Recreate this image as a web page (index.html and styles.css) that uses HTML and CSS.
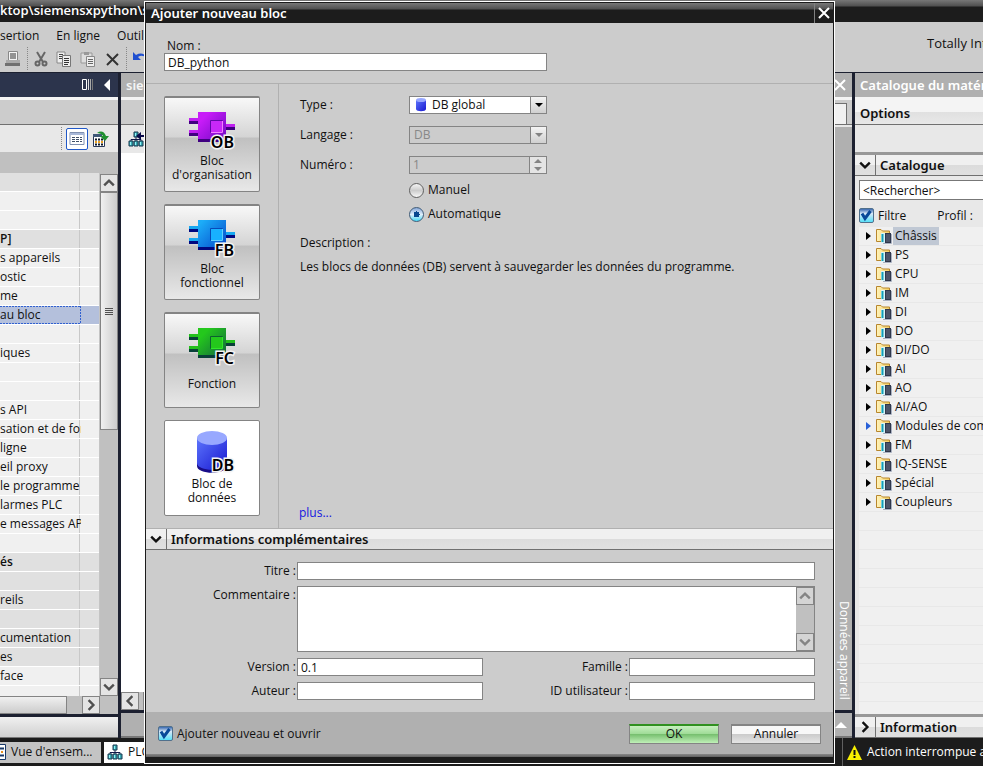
FILE: index.html
```html
<!DOCTYPE html>
<html lang="fr">
<head>
<meta charset="utf-8">
<title>Ajouter nouveau bloc</title>
<link rel="stylesheet" href="styles.css">
</head>
<body>
<svg class="defs" aria-hidden="true">
  <defs>
    <linearGradient id="g-ob" x1="0" y1="0" x2="1" y2="1"><stop offset="0.2" stop-color="#c81cf8"/><stop offset="1" stop-color="#6a08c0"/></linearGradient>
    <linearGradient id="g-fb" x1="0" y1="0" x2="1" y2="1"><stop offset="0.1" stop-color="#1cacf8"/><stop offset="1" stop-color="#0444c8"/></linearGradient>
    <linearGradient id="g-fc" x1="0" y1="0" x2="1" y2="1"><stop offset="0.2" stop-color="#24c81c"/><stop offset="1" stop-color="#126040"/></linearGradient>
    <linearGradient id="g-db" x1="0" y1="0" x2="1" y2="1"><stop offset="0" stop-color="#5c74fc"/><stop offset="1" stop-color="#1818d0"/></linearGradient>
    <linearGradient id="g-folder" x1="0" y1="0" x2="1" y2="0"><stop offset="0" stop-color="#fff2b8"/><stop offset="1" stop-color="#f4cf62"/></linearGradient>
    <symbol id="folder" viewBox="0 0 16 16">
      <path d="M1 2h4l2 1h7v10H1z" fill="url(#g-folder)"/>
      <path d="M5 13.500H0.500V1.500h4.500l1.500 1.500h7v2" fill="none" stroke="#b8862c"/>
      <path d="M5 5h4v10H5z" fill="#d8f4f8"/><path d="M6.500 6v8" stroke="#10a0b8" stroke-width="2"/>
      <path d="M9 5h6v10H9z" fill="#30384c"/>
      <path d="M10 6h4v8h-4z" fill="#4c5468"/>
      <path d="M15.500 6v9.500H7" fill="none" stroke="#a8b0c0"/>
    </symbol>
    <symbol id="down" viewBox="0 0 10 8"><path d="M1 2l4 4 4-4" fill="none" stroke="currentColor" stroke-width="2"/></symbol>
    <symbol id="network" viewBox="0 0 16 16">
      <path d="M8 6v3M3 11V8.500h10V11M8 9v2" fill="none" stroke="#101848"/>
      <path d="M6 1h4v5H6zM1 10h4v5H1zM6 10h4v5H6zM11 10h4v5h-4z" fill="#38a8b0" stroke="#183850"/>
      <path d="M7 2h1v3H7zM2 11h1v3H2zM7 11h1v3H7zM12 11h1v3h-1z" fill="#90f4f8"/>
    </symbol>
    <symbol id="check" viewBox="0 0 14 14"><path d="M3 5.500l3 5 5.500-7.500" fill="none" stroke="#084898" stroke-width="3"/></symbol>
  </defs>
</svg>

<div class="app">
  <header class="app-title">ktop\siemensxpython\sie</header>
  <div class="app-top">
    <div>
      <nav class="menu"><a href="#">sertion</a><a href="#">En ligne</a><a href="#">Outils</a></nav>
      <div class="tools">
        <svg width="16" height="16" viewBox="0 0 16 16"><path d="M3.500 0.500h9v9h-9z" fill="#f4f4f4" stroke="#888"/><path d="M5 3h6M5 5h6M5 7h6" stroke="#333"/><path d="M1 9h14v4H1z" fill="#aaa"/><path d="M0 12h15v3H0z" fill="#707070"/></svg>
        <i class="dots"></i>
        <svg width="14" height="16" viewBox="0 0 14 16"><path d="M3 1l6 10M11 1L5 11" stroke="#666" stroke-width="2"/><circle cx="3.500" cy="12.500" r="2" fill="none" stroke="#666" stroke-width="2"/><circle cx="10.500" cy="12.500" r="2" fill="none" stroke="#666" stroke-width="2"/></svg>
        <svg width="16" height="16" viewBox="0 0 16 16"><path d="M1 1h8v11H1z" fill="#eee" stroke="#888"/><path d="M3 3.500h4M3 5.500h4M3 7.500h4" stroke="#444"/><path d="M6.500 4.500h8v11h-8z" fill="#eee" stroke="#777"/><path d="M8 7.500h5M8 9.500h5M8 11.500h5M8 13.500h4" stroke="#333"/></svg>
        <svg width="16" height="16" viewBox="0 0 16 16"><path d="M1 2h11v10H1z" fill="#ddd" stroke="#999"/><path d="M4 1h5v3H4z" fill="#999"/><path d="M6.500 5.500h8v10h-8z" fill="#eee" stroke="#888"/><path d="M8 8.500h5M8 10.500h5M8 12.500h5" stroke="#666"/></svg>
        <svg width="16" height="16" viewBox="0 0 16 16"><path d="M3 3l11 11M14 3L3 14" stroke="#333" stroke-width="2"/></svg>
        <i class="dots"></i>
        <svg width="16" height="16" viewBox="0 0 16 16"><path d="M0 1v8h8L5 6q4-3 9 1Q10 0 3 4z" fill="#2050d0"/></svg>
      </div>
    </div>
    <div class="brand">Totally Integrated</div>
  </div>

  <main class="work">
    <section class="left">
      <div class="left-head">
        <svg width="12" height="12" viewBox="0 0 12 12"><path d="M0.500 0.500h4v10h-4z" fill="none" stroke="#fff"/><path d="M6.500 0v11" stroke="#ddd"/><path d="M8.500 0v11" stroke="#aaa"/><path d="M10.500 0v11" stroke="#777"/></svg>
        <svg width="8" height="12" viewBox="0 0 8 12"><path d="M7 0v12L1 6z" fill="#fff"/></svg>
      </div>
      <div class="gap-bar"></div>
      <div class="left-tools">
        <i class="dots"></i>
        <button class="view" aria-label="Liste"><svg width="16" height="14" viewBox="0 0 16 14"><path d="M1 0.500h14v12H1z" fill="#fff" stroke="#8090b0"/><path d="M1 1h14v2H1z" fill="#a8b8d8"/><path d="M3 5.500h10M3 7.500h10M3 9.500h10" stroke="#405068" stroke-dasharray="3 1"/></svg></button>
        <svg width="18" height="18" viewBox="0 0 18 18"><path d="M1.500 4.500h11v12h-11z" fill="#fff" stroke="#283858"/><path d="M1 4h9v3H1z" fill="#405878"/><path d="M3 9.500h8M3 14.500h8" stroke="#101828" stroke-width="2" stroke-dasharray="2 1"/><path d="M3 12h8" stroke="#e8a020" stroke-width="2" stroke-dasharray="2 1"/><path d="M5 3q6-4 9 3h3l-4 5-5-5h3q-2-3-6-3z" fill="#209030"/></svg>
      </div>
      <div class="tree-head"></div>
      <div class="tree-body">
        <ul class="tree">
          <li class="dk"></li><li></li><li></li>
          <li class="dk b">P]</li>
          <li>s appareils</li><li>ostic</li><li>me</li>
          <li class="sel">au bloc</li>
          <li></li><li>iques</li><li></li><li></li>
          <li>s API</li><li>sation et de form</li><li>ligne</li><li>eil proxy</li><li>le programme</li><li>larmes PLC</li><li>e messages API</li>
          <li></li>
          <li class="dk b">és</li><li class="dk"></li><li class="dk">reils</li><li class="dk"></li><li class="dk">cumentation</li><li class="dk">es</li>
          <li>face</li><li></li>
        </ul>
        <div class="vscroll">
          <button aria-label="Haut"><svg class="up" width="12" height="10"><use href="#down"/></svg></button>
          <div class="thumb"><i></i></div>
          <button class="end" aria-label="Bas"><svg width="12" height="10"><use href="#down"/></svg></button>
        </div>
      </div>
      <div class="hscroll">
        <div class="hthumb"></div>
        <button aria-label="Droite"><svg class="rt" width="12" height="10"><use href="#down"/></svg></button>
        <span></span>
      </div>
      <div class="left-foot"></div>
    </section>

    <section class="center">
      <div class="center-head"><span>siemensxpython</span><svg width="12" height="12" viewBox="0 0 12 12"><path d="M1 1l10 10M11 1L1 11" stroke="#fff" stroke-width="2"/></svg></div>
      <div class="center-tabs"><span></span></div>
      <div class="center-tools"><svg width="16" height="16"><use href="#network"/></svg><svg class="arrow" width="10" height="10" viewBox="0 0 10 10"><path d="M0 5l5-4v3h5v2H5v3z" fill="#080848"/></svg></div>
      <div class="center-body">
        <div class="canvas"><div></div><div class="hscroll"><button aria-label="Gauche"><svg class="lt" width="12" height="10"><use href="#down"/></svg></button><div class="hthumb"></div></div></div>
        <div class="side"><span>Données appareil</span></div>
      </div>
      <div class="center-foot"><svg width="12" height="6" viewBox="0 0 12 6"><path d="M0 6l6-6 6 6z" fill="#fff"/></svg></div>
    </section>

    <section class="right">
      <div class="right-head">Catalogue du matériel</div>
      <div class="options">Options</div>
      <div class="blank"></div>
      <div class="bar"><button aria-label="Réduire"><svg width="12" height="10"><use href="#down"/></svg></button><h2>Catalogue</h2></div>
      <div class="search"><input aria-label="Rechercher" value="&lt;Rechercher&gt;"></div>
      <div class="filter"><label class="tick"><input type="checkbox" checked><svg width="14" height="14"><use href="#check"/></svg>Filtre</label><span>Profil :</span></div>
      <ul class="catalog">
        <li class="on"><svg width="16" height="16"><use href="#folder"/></svg><span>Châssis</span></li>
        <li><svg width="16" height="16"><use href="#folder"/></svg><span>PS</span></li>
        <li><svg width="16" height="16"><use href="#folder"/></svg><span>CPU</span></li>
        <li><svg width="16" height="16"><use href="#folder"/></svg><span>IM</span></li>
        <li><svg width="16" height="16"><use href="#folder"/></svg><span>DI</span></li>
        <li><svg width="16" height="16"><use href="#folder"/></svg><span>DO</span></li>
        <li><svg width="16" height="16"><use href="#folder"/></svg><span>DI/DO</span></li>
        <li><svg width="16" height="16"><use href="#folder"/></svg><span>AI</span></li>
        <li><svg width="16" height="16"><use href="#folder"/></svg><span>AO</span></li>
        <li><svg width="16" height="16"><use href="#folder"/></svg><span>AI/AO</span></li>
        <li class="blue"><svg width="16" height="16"><use href="#folder"/></svg><span>Modules de communication</span></li>
        <li><svg width="16" height="16"><use href="#folder"/></svg><span>FM</span></li>
        <li><svg width="16" height="16"><use href="#folder"/></svg><span>IQ-SENSE</span></li>
        <li><svg width="16" height="16"><use href="#folder"/></svg><span>Spécial</span></li>
        <li><svg width="16" height="16"><use href="#folder"/></svg><span>Coupleurs</span></li>
      </ul>
      <div class="bar"><button aria-label="Développer"><svg class="rt" width="12" height="10"><use href="#down"/></svg></button><h2>Information</h2></div>
    </section>
  </main>

  <footer class="status">
    <div class="tab"><svg width="6" height="16" viewBox="0 0 6 16"><path d="M0 0.500h5.500v15H0" fill="#fff" stroke="#183868"/><path d="M0 4.500h4M0 11.500h4" stroke="#183868" stroke-width="2"/><path d="M1 8h2" stroke="#e89020" stroke-width="2"/></svg>Vue d'ensem...</div>
    <div class="tab active"><svg width="16" height="16"><use href="#network"/></svg>PLC_1</div>
    <div class="message"><svg width="15" height="15" viewBox="0 0 15 15"><path d="M7.500 0L15 15H0z" fill="#f8f000"/><path d="M7.500 5v5M7.500 11v2" stroke="#101010" stroke-width="2"/></svg>Action interrompue avec</div>
  </footer>
</div>

<form class="dialog" role="dialog" aria-labelledby="dlg-title">
  <div class="dlg-head"><h1 id="dlg-title">Ajouter nouveau bloc</h1><button type="button" aria-label="Fermer"><svg width="12" height="12" viewBox="0 0 12 12"><path d="M1 1l10 10M11 1L1 11" stroke="#fff" stroke-width="2"/></svg></button></div>
  <div class="name"><label for="nom">Nom :</label><input id="nom" value="DB_python"></div>
  <div class="dlg-main">
    <div class="kinds">
      <button type="button"><svg width="48" height="42" viewBox="0 0 48 42"><path d="M2 9h9v3H2zM2 21h9v3H2zM39 15h9v3h-9z" fill="#c020f0"/><path d="M2 12h9v3H2zM2 24h9v3H2zM39 18h9v3h-9z" fill="#400080"/><path d="M11 3h28v30H11z" fill="url(#g-ob)"/><path d="M11 30h28v3H11z" fill="#400080"/><path d="M23.500 11.500h12v12h-12z" fill="#c828f8" stroke="#6008a8"/><path d="M24 23.500h11.500V12" fill="none" stroke="#f080ff"/><text x="47" y="39">OB</text></svg><span>Bloc<br>d'organisation</span></button>
      <button type="button"><svg width="48" height="42" viewBox="0 0 48 42"><path d="M2 9h9v3H2zM2 21h9v3H2zM39 15h9v3h-9z" fill="#18a8f0"/><path d="M2 12h9v3H2zM2 24h9v3H2zM39 18h9v3h-9z" fill="#000880"/><path d="M11 3h28v30H11z" fill="url(#g-fb)"/><path d="M11 30h28v3H11z" fill="#000880"/><path d="M23.500 11.500h12v12h-12z" fill="#18b0ff" stroke="#0848b8"/><path d="M24 23.500h11.500V12" fill="none" stroke="#60d0ff"/><text x="47" y="39">FB</text></svg><span>Bloc<br>fonctionnel</span></button>
      <button type="button"><svg width="48" height="42" viewBox="0 0 48 42"><path d="M2 9h9v3H2zM2 21h9v3H2zM39 15h9v3h-9z" fill="#24c01c"/><path d="M2 12h9v3H2zM2 24h9v3H2zM39 18h9v3h-9z" fill="#084038"/><path d="M11 3h28v30H11z" fill="url(#g-fc)"/><path d="M11 30h28v3H11z" fill="#084038"/><path d="M23.500 11.500h12v12h-12z" fill="#24c81c" stroke="#0c6030"/><path d="M24 23.500h11.500V12" fill="none" stroke="#30e828"/><text x="47" y="39">FC</text></svg><span>Fonction</span></button>
      <button type="button" class="current"><svg width="48" height="42" viewBox="0 0 48 42"><path d="M10 6v28c0 9 30 9 30 0V6z" fill="#180c88"/><path d="M10 6v25c0 9 30 9 30 0V6z" fill="url(#g-db)"/><ellipse cx="25" cy="6" rx="15" ry="7" fill="#98a8ff"/><text x="47" y="39">DB</text></svg><span>Bloc de<br>données</span></button>
    </div>
    <div class="detail">
      <div class="fields">
        <label for="type">Type :</label>
        <div class="pick"><svg class="mini" width="12" height="15" viewBox="0 0 12 15"><path d="M1 3v9c0 3 10 3 10 0V3z" fill="url(#g-db)"/><ellipse cx="6" cy="3" rx="5" ry="2" fill="#98a8ff"/></svg><select id="type" class="iconed"><option>DB global</option></select><i class="tri"></i></div>
        <label for="lang">Langage :</label>
        <div class="pick"><select id="lang" disabled><option>DB</option></select><i class="tri off"></i></div>
        <label for="num">Numéro :</label>
        <div class="spin"><input id="num" value="1" disabled><div><i class="u"></i><i class="d"></i></div></div>
      </div>
      <div class="radios">
        <label><input type="radio" name="mode">Manuel</label>
        <label><input type="radio" name="mode" checked>Automatique</label>
      </div>
      <p>Description :</p>
      <p>Les blocs de données (DB) servent à sauvegarder les données du programme.</p>
      <a class="more" href="#">plus...</a>
    </div>
  </div>
  <div class="bar dlg-bar"><button type="button" aria-label="Réduire"><svg width="12" height="10"><use href="#down"/></svg></button><h2>Informations complémentaires</h2></div>
  <div class="extra">
    <label for="titre">Titre :</label><input id="titre" class="wide">
    <label class="high" for="com">Commentaire :</label>
    <div class="wide memo"><textarea id="com"></textarea><div class="memo-scroll"><button type="button" aria-label="Haut"><svg class="up" width="12" height="10"><use href="#down"/></svg></button><button type="button" aria-label="Bas"><svg width="12" height="10"><use href="#down"/></svg></button></div></div>
    <label for="ver">Version :</label><input id="ver" value="0.1"><label for="fam">Famille :</label><input id="fam">
    <label for="aut">Auteur :</label><input id="aut"><label for="uid">ID utilisateur :</label><input id="uid">
  </div>
  <div class="dlg-foot">
    <label class="tick"><input type="checkbox" checked><svg width="14" height="14"><use href="#check"/></svg>Ajouter nouveau et ouvrir</label>
    <button type="submit" class="ok">OK</button><button type="button">Annuler</button>
  </div>
</form>
</body>
</html>
```
FILE: styles.css
```css
* { box-sizing: border-box; }
html, body { height: 100%; margin: 0; }
body { font: 12px/14px "Open Sans", "Noto Sans", sans-serif; color: #101010; overflow: hidden; position: relative; }
button, input, select, textarea { font: inherit; color: inherit; margin: 0; padding: 0; border-radius: 0; }
button { border: 0; background: none; }
h1, h2, p, ul { margin: 0; padding: 0; font-size: 13px; }
h1, h2, .options, .right-head, .center-head { font-family: "Noto Sans", sans-serif; font-weight: 600; }
li { list-style: none; }
svg { display: block; flex: none; overflow: visible; }
.defs { position: absolute; width: 0; height: 0; }
.up { transform: rotate(180deg); }
.rt { transform: rotate(-90deg); }
.lt { transform: rotate(90deg); }
.dots { width: 1px; border-left: 1px dotted #888; align-self: stretch; }

.app { height: 100%; display: flex; flex-direction: column; background: #1c2030; }
.app-title { height: 22px; line-height: 21px; flex: none; font-size: 13px; font-weight: 600; color: #fff; white-space: nowrap; background: linear-gradient(#777 0, #505050 6px, #1c1c1c 7px); }
.app-top { height: 50px; flex: none; display: flex; justify-content: space-between; background: #ccc; overflow: hidden; }
.menu { display: flex; gap: 17px; padding-top: 7px; }
.menu a { color: inherit; text-decoration: none; }
.tools { display: flex; align-items: center; gap: 8px; padding: 4px 0 0 5px; height: 27px; }
.tools .dots { margin: 0 -2px; }
.brand { flex: none; width: 56px; padding-top: 14px; font-size: 13px; white-space: nowrap; }

.work { flex: 1; min-height: 0; display: grid; grid-template-columns: 118px minmax(0, 1fr) 128px; column-gap: 3px; padding-top: 1px; }
.work > section { display: flex; flex-direction: column; min-width: 0; min-height: 0; overflow: hidden; }

.left { background: #c4c4c4; }
.left-head { height: 27px; flex: none; display: flex; justify-content: flex-end; align-items: center; gap: 9px; padding-right: 7px; background: #2c344c; border-bottom: 3px solid #f4f4f4; }
.gap-bar { height: 25px; flex: none; background: #ccc; border-bottom: 1px solid #707070; }
.left-tools { height: 27px; flex: none; display: flex; align-items: center; justify-content: flex-end; gap: 4px; padding: 2px 8px 2px 0; background: #e8e8e8; }
.view { width: 22px; height: 22px; display: grid; place-items: center; background: #fff; border: 1px solid #2058c8; border-radius: 2px; }
.tree-head { height: 21px; flex: none; background: #c0c0c0; }
.tree-body { flex: 1; min-height: 0; display: flex; }
.tree { flex: 1; overflow: hidden; white-space: nowrap; font-size: 12px; }
.tree li { height: 19px; line-height: 18px; padding-right: 18px; border-bottom: 1px solid #fff; background: linear-gradient(#c8c8c8, #c8c8c8) 79px 0 / 1px 100% no-repeat #f0f0f0; overflow: clip; overflow-clip-margin: content-box; }
.tree .dk { background-color: #e0e0e0; }
.tree .b { font-weight: 600; }
.tree .sel { background-color: #b4c0dc; background-image: repeating-linear-gradient(90deg, #3060d0 0 2px, transparent 2px 3px), repeating-linear-gradient(90deg, #3060d0 0 2px, transparent 2px 3px), repeating-linear-gradient(#3060d0 0 2px, transparent 2px 3px); background-size: 80px 1px, 80px 1px, 1px 18px; background-position: 0 0, 0 17px, 80px 0; }
.vscroll { width: 18px; margin-left: 1px; padding-top: 1px; display: flex; flex-direction: column; background: #c0c0c0; }
.vscroll button, .hscroll button, .memo-scroll button { width: 18px; height: 18px; flex: none; display: grid; place-items: center; color: #505050; border: 1px solid #848484; background: #e4e4e4; }
.vscroll .thumb { height: 238px; display: grid; place-items: center; border: 1px solid #848484; background: linear-gradient(90deg, #f0f0f0, #ccc); }
.thumb i { width: 8px; height: 7px; background: repeating-linear-gradient(#505050 0 1px, transparent 1px 2px); }
.vscroll .end { margin-top: auto; }
.hscroll { height: 18px; flex: none; display: flex; background: #c0c0c0; }
.hthumb { flex: 1; border: 1px solid #848484; background: linear-gradient(#f0f0f0, #ccc); }
.left .hthumb { border-left: 0; margin-right: 15px; }
.left .hscroll span { width: 18px; }
.left-foot { height: 24px; flex: none; border-top: 3px solid #1c2030; background: linear-gradient(#f0f0f0, #d0d0d0); border-bottom: 1px solid #777; }

.center-head { height: 24px; flex: none; display: flex; justify-content: space-between; align-items: center; padding: 0 6px 0 5px; font-size: 13px; color: #f4f4f4; background: #b0b0b0; }
.center-tabs { height: 28px; flex: none; display: flex; padding: 3px 5px 0 0; border-top: 3px solid #f4f4f4; border-bottom: 1px solid #707070; background: #ccc; }
.center-tabs span { flex: 1; margin-left: 60px; background: #f0f0f0; border: 1px solid #707070; border-bottom: 0; }
.center-tools { height: 28px; flex: none; display: flex; align-items: center; padding-left: 7px; background: #e8e8e8; }
.center-tools .arrow { margin-left: -8px; margin-top: -6px; }
.center-body { flex: 1; min-height: 0; display: flex; }
.canvas { flex: 1; display: flex; flex-direction: column; justify-content: space-between; background: #fff; }
.canvas .hthumb { margin-left: 4px; }
.side { width: 18px; margin-top: -26px; padding: 0 0 10px 2px; display: flex; align-items: flex-end; background: #b0b0b0; color: #fff; }
.side span { writing-mode: vertical-rl; line-height: 16px; white-space: nowrap; }
.center-foot { height: 28px; flex: none; display: flex; justify-content: flex-end; padding: 9px 5px 0; background: #b0b0b0; border-top: 3px solid #1c2030; border-bottom: 2px solid #777; }

.right { background: #e8e8e8; }
.right-head { height: 27px; flex: none; line-height: 24px; padding-left: 5px; font-size: 13px; white-space: nowrap; color: #fff; background: #b0b0b0; border-bottom: 3px solid #f4f4f4; }
.options { height: 25px; flex: none; line-height: 26px; padding-left: 5px; font-size: 13px; background: linear-gradient(#f4f4f4 50%, #e0e0e0 50%, #e8e8e8); border-bottom: 1px solid #707070; }
.blank { height: 27px; flex: none; }
.bar { height: 24px; flex: none; display: flex; border-top: 3px solid #989898; border-bottom: 1px solid #707070; background: linear-gradient(#f0f0f0 50%, #dcdcdc 50%, #e0e0e0); }
.bar button { width: 21px; display: grid; place-items: center; border-right: 1px solid #707070; }
.bar h2 { padding-left: 4px; line-height: 20px; white-space: nowrap; }
.search { padding: 4px 0 0 4px; flex: none; display: flex; }
.search input { flex: 1; min-width: 0; height: 20px; padding-left: 3px; border: 1px solid #777; border-right: 0; background: #fff; }
.filter { height: 27px; flex: none; display: flex; align-items: center; gap: 31px; padding: 4px 0 0 4px; }
.tick { display: flex; align-items: center; position: relative; gap: 4px; }
.tick input { appearance: none; width: 15px; height: 15px; border: 1px solid #50708c; border-radius: 2px; background: linear-gradient(#3868b0, #d8e8f8 35%, #58e0f8); }
.tick svg { position: absolute; left: 0; top: 0; }
.catalog { flex: 1; min-height: 0; overflow: hidden; margin-left: 4px; font-size: 12px; background: repeating-linear-gradient(#f0f0f0 0 18px, #e8e8e8 18px 19px); }
.catalog li { height: 19px; display: flex; align-items: center; padding: 0 0 1px 7px; white-space: nowrap; }
.catalog li::before { content: ""; border: 4px solid transparent; border-left: 5px solid #000; border-right: 0; margin-right: 5px; }
.catalog .blue::before { border-left-color: #2860d8; }
.catalog span { line-height: 18px; padding: 0 2px; margin-left: 1px; }
.catalog .on span { background: #c0c8d4; }

.status { height: 28px; flex: none; display: flex; align-items: center; gap: 3px; background: #1c1c1c; }
.tab { height: 21px; width: 101px; flex: none; display: flex; align-items: center; gap: 5px; background: #c4c4c4; white-space: nowrap; overflow: hidden; }
.tab.active { flex: 1; padding-left: 3px; background: #fff; margin-right: 4px; }
.message { flex: none; width: 141px; align-self: stretch; overflow: hidden; display: flex; align-items: center; gap: 5px; padding-left: 4px; color: #fff; white-space: nowrap; border-left: 1px solid #606060; }

.dialog { position: absolute; inset: 1px 148px 2px 144px; display: flex; flex-direction: column; border: 1px solid #fff; background: #ccc; box-shadow: inset 0 0 0 1px #1c1c1c; padding: 1px; }
.dlg-head { height: 20px; flex: none; display: flex; justify-content: space-between; background: linear-gradient(#777 0, #505050 6px, #1c1c1c 7px); color: #fff; }
.dlg-head h1 { padding-left: 5px; line-height: 20px; }
.dlg-head button { width: 19px; display: grid; place-items: center; border-left: 1px solid #808080; }
.name { height: 61px; flex: none; padding: 16px 18px 0; border-bottom: 1px solid #b0b0b0; }
.name label { display: block; padding-left: 3px; }
.dialog input:not([type]), .dialog textarea { background: #fff; border: 1px solid #848484; padding: 0 3px; }
.name input { display: block; width: 383px; max-width: 100%; height: 18px; }
.dlg-main { flex: 1; min-height: 0; display: flex; }
.kinds { width: 133px; flex: none; display: flex; flex-direction: column; gap: 12px; padding: 12px 0 0 18px; border-right: 1px solid #b0b0b0; }
.kinds button { width: 96px; height: 96px; flex: none; display: flex; flex-direction: column; align-items: center; padding-top: 11px; border: 1px solid #848484; border-top-width: 2px; border-radius: 2px; background: linear-gradient(#f8f8f8, #d4d4d4 42%, #c0c0c0 43%, #e8e8e8); }
.kinds .current { background: #fff; border-top-width: 1px; }
.kinds svg { margin: 0 2px 2px 0; }
.kinds button span { flex: 1; display: grid; align-content: center; max-height: 30px; }
.kinds text { font: 600 16px "Noto Sans", sans-serif; text-anchor: end; fill: #000; stroke: #f4f4f4; stroke-width: 3px; paint-order: stroke; }
.detail { flex: 1; min-width: 0; display: flex; flex-direction: column; padding: 12px 20px 8px; }
.detail p { font-size: 12px; margin-bottom: 10px; }
.fields { display: grid; grid-template-columns: 109px 138px; row-gap: 12px; padding-left: 1px; }
.fields label { line-height: 18px; }
.pick { position: relative; display: flex; }
.pick select { appearance: none; flex: 1; height: 18px; padding: 0 4px; border: 1px solid #848484; background: #fff; }
.pick .iconed { padding-left: 22px; }
.pick select:disabled, .spin input:disabled { background: #ccc !important; color: #888; opacity: 1; }
.mini { position: absolute; left: 6px; top: 1px; }
.tri { position: absolute; right: 0; top: 0; width: 17px; height: 18px; display: grid; place-items: center; border: 1px solid #848484; background: linear-gradient(#f4f4f4, #d0d0d0); pointer-events: none; }
.tri::after, .spin .d::after, .spin .u::after { content: ""; border: 4px solid transparent; border-bottom: 0; border-top-color: #000; }
.tri.off::after, .spin .d::after { border-top-color: #848484; }
.spin { display: flex; height: 18px; border: 1px solid #848484; }
.spin input { flex: 1; min-width: 0; border: 0 !important; }
.spin div { width: 17px; display: grid; border-left: 1px solid #848484; background: #e4e4e4; }
.spin i { display: grid; place-items: center; }
.spin .u::after { border: 4px solid transparent; border-top: 0; border-bottom-color: #848484; }
.radios { padding: 8px 0 0 110px; display: grid; gap: 8px; margin-bottom: 14px; }
.radios label { height: 16px; display: flex; align-items: center; gap: 4px; }
.radios input { appearance: none; width: 15px; height: 15px; border: 1px solid #606060; border-radius: 50%; background: linear-gradient(#f4f4f4, #ccc 50%, #f8f8f8); }
.radios input:checked { border-color: #405c78; background: radial-gradient(circle, #084890 0 3px, transparent 3px), linear-gradient(#88a8d8, #e0f0fc 50%, #48d8f4); }
.detail p { padding-left: 1px; }
.more { margin-top: auto; color: #1414e0; text-decoration: none; }
.dlg-bar { height: 22px; border-top: 1px solid #b0b0b0; }
.extra { flex: none; display: grid; grid-template-columns: 151px minmax(0, 1fr) 146px minmax(0, 1fr); row-gap: 6px; padding: 12px 18px 12px 0; align-items: center; }
.extra label { text-align: right; padding-right: 1px; }
.extra .high { align-self: start; padding-top: 2px; }
.extra input { height: 18px; min-width: 0; width: 100%; }
.wide { grid-column: 2 / -1; }
.memo { height: 66px; display: flex; border: 1px solid #848484; }
.dialog .memo textarea { flex: 1; border: 0; resize: none; outline: 0; }
.memo-scroll { width: 18px; display: flex; flex-direction: column; justify-content: space-between; background: #c0c0c0; }
.memo-scroll button { color: #848484; background: #d4d4d4; }
.dlg-foot { height: 50px; flex: none; display: flex; align-items: center; gap: 12px; padding: 0 12px 2px; background: linear-gradient(transparent 42px, #888 42px, #606060 45px) #b0b0b0; border-bottom: 5px solid #1c1c1c; }
.dlg-foot .tick { margin-right: auto; }
.dlg-foot button { width: 90px; height: 20px; border: 1px solid #848484; border-top-width: 2px; background: linear-gradient(#f8f8f8 45%, #ccc 50%, #e4e4e4); line-height: 16px; }
.dlg-foot .ok { border-top-color: #309020; background: linear-gradient(#c8f0c0, #a0dc98 45%, #78c070 50%, #c0f0b8); }
```
